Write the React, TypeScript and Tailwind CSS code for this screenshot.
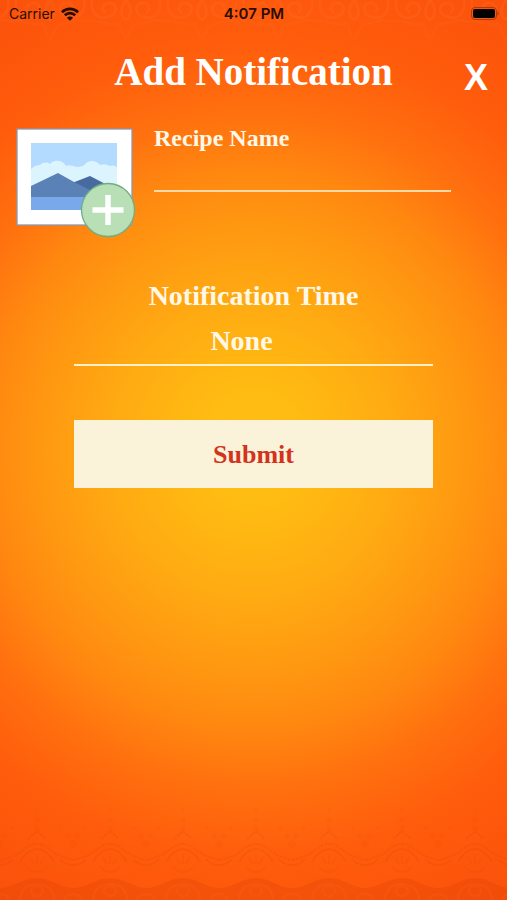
import { useState } from "react"
import type { FormEvent } from "react"

const times = ["None", "Morning", "Afternoon", "Evening"]

function StatusBar() {
    return (
        <div className="grid h-7 grid-cols-3 items-center pr-2 pl-[9px] font-['Inter','Liberation_Sans',sans-serif] text-sm text-[#2a0d02]">
            <div className="flex items-center gap-1.5">
                <span className="font-normal">Carrier</span>
                <svg className="h-[14px] w-[18px]" viewBox="0 0 18 14" fill="none" stroke="currentColor" strokeWidth="2.7" aria-hidden="true">
                    <path d="M0.9 5.2C5.4 0.7 12.6 0.7 17.1 5.2" />
                    <path d="M3.8 8.3C6.8 5.4 11.2 5.4 14.2 8.3" />
                    <path d="M9 13.8 5.9 10.7C7.7 9 10.3 9 12.1 10.7Z" fill="currentColor" stroke="none" />
                </svg>
            </div>
            <span className="text-center text-[15px] font-semibold">4:07 PM</span>
            <svg className="h-[14px] w-7 justify-self-end" viewBox="0 0 28 14" aria-hidden="true">
                <rect x="0.5" y="0.5" width="25" height="12" rx="3.5" fill="none" stroke="#7d2c08" strokeOpacity="0.6" />
                <rect x="2" y="2" width="22" height="9" rx="2" fill="#000" />
                <path d="M26.5 4.5c1.6.6 1.6 3.6 0 4.2z" fill="#7d2c08" fillOpacity="0.6" />
            </svg>
        </div>
    )
}

function Swirls() {
    return (
        <svg className="absolute top-0 left-0 h-12 w-full" aria-hidden="true">
            <defs>
                <pattern id="swirls" x="12" width="76" height="48" patternUnits="userSpaceOnUse">
                    <g fill="none" stroke="#ff7a3c" strokeOpacity="0.16" strokeWidth="2.5">
                        <path d="M4 0C2 12 10 20 20 17S30 4 22 3 13 12 18 12" />
                        <path d="M72 0C74 12 66 20 56 17S46 4 54 3 63 12 58 12" />
                        <path d="M38 0C32 8 32 16 38 20C44 16 44 8 38 0Z" />
                        <path d="M0 22C10 18 16 26 26 24S32 36 38 38C44 36 40 26 50 24S66 18 76 22" strokeOpacity="0.1" />
                    </g>
                </pattern>
            </defs>
            <rect width="100%" height="48" fill="url(#swirls)" />
        </svg>
    )
}

function Lace() {
    return (
        <svg className="absolute bottom-0 left-0 h-[110px] w-full" aria-hidden="true">
            <defs>
                <pattern id="lace" width="73" height="110" patternUnits="userSpaceOnUse">
                    <g fill="none" stroke="#d93c04" strokeOpacity="0.18" strokeWidth="2">
                        <path d="M0 70C8 68 16 66 22 61C28 56 32 54 37 54S46 56 52 61C58 66 66 68 73 70" strokeDasharray="3 1" />
                        <path d="M20 72C24 65 30 59 37 59S50 65 54 72" />
                        <path d="M28 49L37 41L46 49" strokeDasharray="3 1" />
                        <path d="M0 75C7 75 10 73 13 69M73 75C66 75 63 73 60 69" />
                        <path d="M37 64V74M30 67L34 74M44 67L40 74" strokeOpacity="0.1" />
                        <path d="M27 76C31 84 43 84 47 76" strokeOpacity="0.1" />
                    </g>
                    <g fill="#d93c04" fillOpacity="0.08">
                        <circle cx="37" cy="30" r="3" />
                        <circle cx="37" cy="20" r="2" />
                        <circle cx="37" cy="38" r="3" />
                        <circle cx="4" cy="46" r="3" />
                        <circle cx="68" cy="46" r="3" />
                        <circle cx="0" cy="54" r="4" />
                        <circle cx="73" cy="54" r="4" />
                        <circle cx="12" cy="38" r="2" />
                        <circle cx="61" cy="38" r="2" />
                    </g>
                    <path d="M0 98C14 98 22 88 37 88S60 98 73 98V110H0Z" fill="#d93c04" fillOpacity="0.25" />
                    <g fill="none" stroke="#ff6a1c" strokeOpacity="0.18" strokeWidth="2">
                        <ellipse cx="37" cy="101" rx="6" ry="5" />
                        <path d="M20 110C20 100 27 94 37 94S54 100 54 110" />
                        <path d="M0 104C5 104 8 107 9 110M73 104C68 104 65 107 64 110" />
                    </g>
                </pattern>
            </defs>
            <rect width="100%" height="110" fill="url(#lace)" />
        </svg>
    )
}

function PictureIcon() {
    return (
        <svg className="h-[112px] w-[120px]" viewBox="0 0 120 112" aria-hidden="true">
            <rect x="1" y="1" width="115" height="96" fill="#fff" stroke="#8f97ab" strokeWidth="1.3" />
            <path d="M15 15h86v67H15z" fill="#b3daff" />
            <path d="M15 41C18 38 21 37 24 37C27 34 31 34 34 36C38 31 47 32 50 38C54 36 58 39 62 39C66 38 68 38 69 36C73 32 80 32 84 37C89 35 92 37 94 38C97 37 99 38 101 39V64H15Z" fill="#dcf4fe" />
            <path d="M56 55L74 48L101 62V70H62Z" fill="#486a9f" />
            <path d="M15 58L42 45L58 54L90 70H15Z" fill="#5a82b7" />
            <path d="M15 69h86v13H15z" fill="#7aa9eb" />
            <circle cx="92" cy="82" r="26.5" fill="#b9dfb7" stroke="#6fae84" strokeWidth="1.3" />
            <path d="M92 67V97M76.500 82H107.500" stroke="#fff" strokeWidth="5.5" />
        </svg>
    )
}

export default function App() {
    const [name, setName] = useState("")
    const [time, setTime] = useState("None")

    function submitForm(e: FormEvent) {
        e.preventDefault()
    }

    return (
        <div className="relative min-h-screen overflow-hidden bg-[radial-gradient(ellipse_114%_67%_at_50%_50%,#ffc013_0%,#ffbb12_10%,#ffaa12_25%,#ff9611_38%,#ff8810_46%,#ff700f_56%,#ff5c0c_68%,#fb520b_85%,#f34c0b_100%)] font-['Palatino','Liberation_Serif',serif] font-bold text-[#fff8e6]">
            <Swirls />
            <Lace />
            <div className="relative">
                <StatusBar />
                <header className="mt-4.5 grid grid-cols-[1fr_auto_1fr] items-center px-[19px]">
                    <h1 className="col-start-2 text-[39px] leading-12 text-white">Add Notification</h1>
                    <button type="button" aria-label="Close" className="mt-3 justify-self-end font-['Liberation_Sans',sans-serif] text-4xl text-white">X</button>
                </header>
                <form onSubmit={submitForm}>
                    <div className="mt-7.5 flex items-start gap-[18px] pr-14 pl-4">
                        <button type="button" aria-label="Add picture" className="shrink-0">
                            <PictureIcon />
                        </button>
                        <div className="min-w-0 flex-1">
                            <label htmlFor="recipe-name" className="block text-2xl leading-5">Recipe Name</label>
                            <input
                                type="text"
                                id="recipe-name"
                                value={name}
                                onChange={(e) => setName(e.target.value)}
                                className="block h-11 w-full border-b-2 border-[#ffd9a6] bg-transparent text-2xl outline-none"
                            />
                        </div>
                    </div>
                    <div className="mt-9.5 px-[74px] text-center">
                        <label htmlFor="notification-time" className="block text-[28px] leading-9">Notification Time</label>
                        <select
                            id="notification-time"
                            value={time}
                            onChange={(e) => setTime(e.target.value)}
                            className="mt-1 block h-12 w-full appearance-none border-b-2 border-[#fff0c8] bg-transparent pr-6 text-center text-[28px] leading-9 outline-none [text-align-last:center]"
                        >
                            {times.map((t) => (
                                <option key={t}>{t}</option>
                            ))}
                        </select>
                        <button type="submit" className="mt-13.5 block h-[68px] w-full bg-[#fbf3d9] text-[26px] text-[#d3321c]">Submit</button>
                    </div>
                </form>
            </div>
        </div>
    )
}
